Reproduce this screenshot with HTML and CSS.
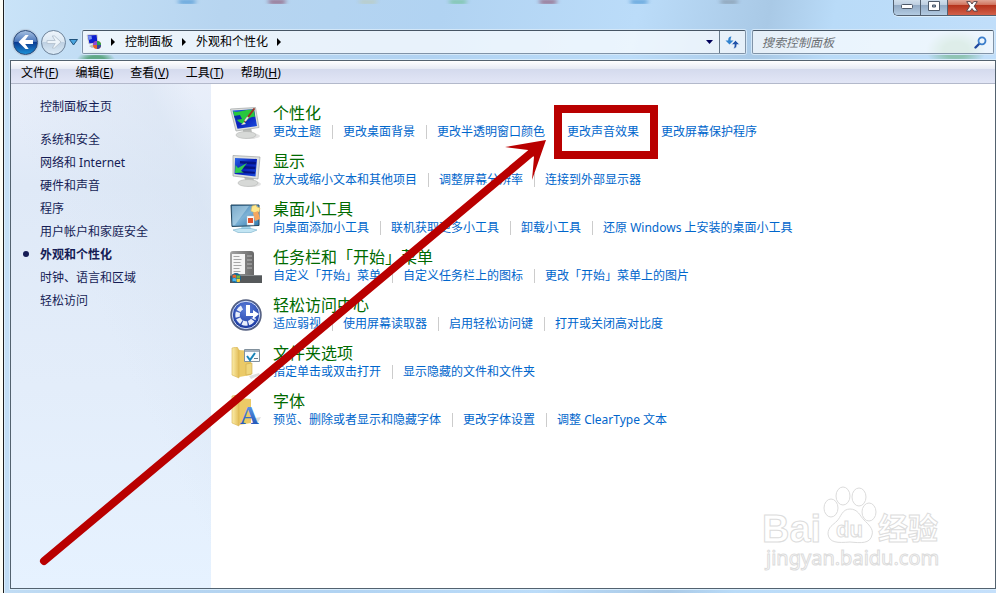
FILE: index.html
```html
<!DOCTYPE html>
<html lang="zh-CN">
<head>
    <meta charset="UTF-8">
    <meta name="viewport" content="width=device-width, initial-scale=1.0">
    <title>外观和个性化</title>
    <link rel="stylesheet" href="styles.css">
</head>
<body>

    <div class="window">
        <div class="caption">
            <div class="taskbar-blur">
                <i class="spot blue"></i>
                <i class="spot red"></i>
                <i class="spot yellow"></i>
                <i class="spot green"></i>
                <i class="spot red"></i>
                <i class="spot blue"></i>
                <i class="spot gray"></i>
            </div>
            <div class="caption-buttons">
                <button class="caption-button" aria-label="最小化">
                    <svg width="14" height="8" viewBox="0 0 14 8"><rect x="1.5" y="2.5" width="11" height="4" rx="1" fill="#fff" stroke="#4d5969"/></svg>
                </button>
                <button class="caption-button" aria-label="最大化">
                    <svg width="12" height="11" viewBox="0 0 12 11"><path d="M.5.5h11v9H.5zM4.500 4h3v2h-3z" fill="#fff" fill-rule="evenodd" stroke="#4d5969"/></svg>
                </button>
                <button class="caption-button close" aria-label="关闭">
                    <svg width="12" height="11" viewBox="0 0 12 11"><path d="M.7.600h3.600L6 3 7.700.600h3.600L8.200 5.200l3.300 4.900H7.800L6 7.500l-1.800 2.600H.5l3.300-4.900z" fill="#fff" stroke="#59484d"/></svg>
                </button>
            </div>
        </div>

        <div class="nav-bar">
            <div class="history">
                <button class="round back" aria-label="后退">
                    <svg width="16" height="14" viewBox="0 0 16 14"><path d="M7.500 0 .5 7l7 7h3.200L7.200 9H15V5H7.200l3.500-5z" fill="#fff"/></svg>
                </button>
                <button class="round forward" aria-label="前进">
                    <svg width="16" height="14" viewBox="0 0 16 14"><path d="m8.500 1 6.500 6-6.500 6H6.200l3-4.500H1v-3h8.200L6.200 1z" fill="#edf4fa" stroke="#b9c6d3"/></svg>
                </button>
                <button class="recent" aria-label="最近浏览的页面">
                    <svg width="9" height="7" viewBox="0 0 9 7"><path d="M.5.5h8L4.500 6z" fill="#4aa5e0" stroke="#1f527d"/></svg>
                </button>
            </div>
            <div class="address">
                <svg width="16" height="16" viewBox="0 0 16 16">
                    <path d="m1 1 10-.5 1 8.500-9 1z" fill="#0d1ed0" stroke="#d9d9d4"/>
                    <path d="m2 2 3.500 0 .5 3-3.500 1z" fill="#7892f2"/>
                    <path d="m3 12 5-2 3 2-5 2z" fill="#bbbdb9"/>
                    <circle cx="11" cy="11" r="4" fill="#e3632b"/>
                    <path d="M11 11V7a4 4 0 0 1 4 4z" fill="#26a64b"/>
                    <path d="M11 11H7a4 4 0 0 1 4-4z" fill="#8d4ad5"/>
                    <path d="M11 11h4a4 4 0 0 1-4 4z" fill="#37469f"/>
                </svg>
                <nav class="crumbs">
                    <i class="arrow"></i><a href="#">控制面板</a>
                    <i class="arrow"></i><a href="#">外观和个性化</a>
                    <i class="arrow"></i>
                </nav>
                <button class="drop" aria-label="以前的位置"><svg width="7" height="4" viewBox="0 0 7 4"><path d="M0 0h7L3.500 4z" fill="#00005a"/></svg></button>
                <button class="refresh" aria-label="刷新">
                    <svg width="15" height="13" viewBox="0 0 15 13">
                        <path d="M6.500.500C4 .5 3.200 2 3.200 4.500H.5l4 4 4-4H5.600c0-1.700.2-2.600.900-4z" fill="#3183cf"/>
                        <path d="M8.500 12.500c2.500 0 3.300-1.500 3.300-4h2.700l-4-4-4 4h2.900c0 1.700-.2 2.600-.9 4z" fill="#2253a9" stroke="#eaf3fc" stroke-width=".5"/>
                    </svg>
                </button>
            </div>
            <div class="search">
                <input type="text" class="search-box" aria-label="搜索控制面板" placeholder="搜索控制面板">
                <svg width="13" height="13" viewBox="0 0 13 13" fill="none" stroke-linecap="round">
                    <path d="M1.500 11.500 5 8" stroke="#20489e" stroke-width="2.400"/>
                    <circle cx="8" cy="4.800" r="3.500" stroke="#3b7ecb" stroke-width="1.800"/>
                </svg>
            </div>
        </div>

        <div class="frame">
            <div class="menu-bar">
                <button>文件(<u>F</u>)</button>
                <button>编辑(<u>E</u>)</button>
                <button>查看(<u>V</u>)</button>
                <button>工具(<u>T</u>)</button>
                <button>帮助(<u>H</u>)</button>
            </div>
            <div class="main">
                <aside class="sidebar">
                    <a class="home" href="#">控制面板主页</a>
                    <ul>
                        <li><a href="#">系统和安全</a></li>
                        <li><a href="#">网络和 Internet</a></li>
                        <li><a href="#">硬件和声音</a></li>
                        <li><a href="#">程序</a></li>
                        <li><a href="#">用户帐户和家庭安全</a></li>
                        <li class="current"><a href="#">外观和个性化</a></li>
                        <li><a href="#">时钟、语言和区域</a></li>
                        <li><a href="#">轻松访问</a></li>
                    </ul>
                </aside>

                <div class="content">
                    <svg width="0" height="0" class="defs">
                        <defs>
                            <linearGradient id="folder" x1="0" x2="1"><stop offset="0" stop-color="#fbedaa"/><stop offset="1" stop-color="#e3bd57"/></linearGradient>
                            <linearGradient id="screen" x1="0" y1="0" x2="1" y2="1"><stop offset="0" stop-color="#2a66e8"/><stop offset=".5" stop-color="#0a21b8"/><stop offset="1" stop-color="#1c4fe0"/></linearGradient>
                            <linearGradient id="glass" x1="0" y1="0" x2="1" y2="1"><stop offset="0" stop-color="#2d6d9e"/><stop offset=".5" stop-color="#7db2d6"/><stop offset="1" stop-color="#2c78ad"/></linearGradient>
                            <linearGradient id="panel" x1="0" x2="1"><stop offset="0" stop-color="#a5a5a5"/><stop offset="1" stop-color="#686868"/></linearGradient>
                            <radialGradient id="ease" cx=".5" cy=".3" r=".7"><stop offset="0" stop-color="#5c7fda"/><stop offset="1" stop-color="#15339c"/></radialGradient>
                            <linearGradient id="letter" x1="0" y1="0" x2="0" y2="1"><stop offset="0" stop-color="#6ca7ee"/><stop offset="1" stop-color="#1245ad"/></linearGradient>
                        </defs>
                    </svg>

                    <div class="category">
                        <svg width="32" height="32" viewBox="0 0 32 32">
                            <ellipse cx="20" cy="29" rx="10" ry="3" fill="#e3e3e3"/>
                            <path d="m12 21 9-1 1 6-8 1z" fill="#b8bab8"/>
                            <ellipse cx="16" cy="28" rx="10" ry="3.500" fill="#d7d9d7" stroke="#b3b5b3" stroke-width=".6"/>
                            <path d="m.5 2 25-1.500 3.500 20-23 3.500z" fill="#dfe1df" stroke="#9fa3a3" stroke-width=".7"/>
                            <path d="m2.500 3.500 21.500-1.200 3 16.700-19.500 2.800z" fill="url(#screen)"/>
                            <path d="M3 4c5 3 10-2 21-1l1 7c-5-1-8 4-12 7L9 15l-4-4z" fill="#28c83e"/>
                            <path d="m4 9 6-1 2 4-6 1z" fill="#0b27ae"/>
                            <path d="m14 15-3 3 5-1z" fill="#efe9ce"/>
                            <path d="m15 14 9-12" stroke="#9a3324" stroke-width="2" stroke-linecap="round"/>
                            <path d="m15 14 3-4" stroke="#d9dee8" stroke-width="2"/>
                        </svg>
                        <div>
                            <h2><a href="#">个性化</a></h2>
                            <ul class="tasks">
                                <li><a href="#">更改主题</a></li>
                                <li><a href="#">更改桌面背景</a></li>
                                <li><a href="#">更改半透明窗口颜色</a></li>
                                <li><a href="#">更改声音效果</a></li>
                                <li><a href="#">更改屏幕保护程序</a></li>
                            </ul>
                        </div>
                    </div>

                    <div class="category">
                        <svg width="32" height="32" viewBox="0 0 32 32">
                            <ellipse cx="22" cy="29" rx="9" ry="3" fill="#e3e3e3"/>
                            <path d="m14 22 9-1 1 5-8 1z" fill="#b8bab8"/>
                            <ellipse cx="18" cy="28" rx="10" ry="3.500" fill="#d7d9d7" stroke="#b3b5b3" stroke-width=".6"/>
                            <path d="m3 .5 27 1.500-2 22-25-3z" fill="#dfe1df" stroke="#9fa3a3" stroke-width=".7"/>
                            <path d="m5 3 22 1-1.500 17.500L4.500 19z" fill="url(#screen)"/>
                            <path d="m10 6 16 1-.3 2.500L10 8.500zM13 11l12.500.7-.3 2.500-12.500-.7zM12 16l13 .7-.2 2-13-.7z" fill="#061482"/>
                            <path d="m5 18 .5-8 2.500 3 9-5-6 8 3 1.500z" fill="#31cc50"/>
                        </svg>
                        <div>
                            <h2><a href="#">显示</a></h2>
                            <ul class="tasks">
                                <li><a href="#">放大或缩小文本和其他项目</a></li>
                                <li><a href="#">调整屏幕分辨率</a></li>
                                <li><a href="#">连接到外部显示器</a></li>
                            </ul>
                        </div>
                    </div>

                    <div class="category">
                        <svg width="32" height="32" viewBox="0 0 32 32">
                            <path d="M12 22h8l1 4H11z" fill="#9fd3ea"/>
                            <path d="m3 27 7-1.500h11l6 1.500-6 2.500H8z" fill="#c2e5f3" stroke="#77afca" stroke-width=".6"/>
                            <path d="M1 2h28v20.500L2 23.500z" fill="url(#glass)" stroke="#25475e"/>
                            <path d="M2 3h17L5 22H2.500z" fill="#bcdbeb" opacity=".55"/>
                            <path d="m22 3 4-1 1 2 3 1-1 4-4 1-4-2z" fill="#ffe78b" stroke="#dcb44c" stroke-width=".5"/>
                            <path d="m23 10 5-2 2 8-5 2z" fill="#f5a65e"/>
                            <path d="M17 13h7v9h-7z" fill="#fff" stroke="#b8c0c5" stroke-width=".5"/>
                            <path d="M18 15h5v5h-5z" fill="#e2542e"/>
                        </svg>
                        <div>
                            <h2><a href="#">桌面小工具</a></h2>
                            <ul class="tasks">
                                <li><a href="#">向桌面添加小工具</a></li>
                                <li><a href="#">联机获取更多小工具</a></li>
                                <li><a href="#">卸载小工具</a></li>
                                <li><a href="#">还原 Windows 上安装的桌面小工具</a></li>
                            </ul>
                        </div>
                    </div>

                    <div class="category">
                        <svg width="32" height="32" viewBox="0 0 32 32">
                            <path d="M3 0h18q3 0 3 3v22H0V3q0-3 3-3z" fill="url(#panel)"/>
                            <path d="M2 3h13v20H2z" fill="#f5f5f5"/>
                            <path d="M3.500 5.500h6m-6 3h8m-8 3h7m-7 3h8m-8 3h6m-6 3h7" stroke="#a6a6a6"/>
                            <path d="M17 5h5m-5 4h5m-5 4h5m-5 4h5" stroke="#b5b5b5"/>
                            <path d="M0 24h32v8H0z" fill="#56595b"/>
                            <path d="M0 24.500h32" stroke="#85898b"/>
                            <circle cx="6" cy="27" r="5" fill="#176796"/>
                            <path d="M2.500 24q2-1 3.500 0v3q-2-1-3.500 0z" fill="#e9672d"/>
                            <path d="M6.500 24q2 1 3.500 0v3q-2 1-3.500 0z" fill="#75b73b"/>
                            <path d="M2.500 27.500q2-1 3.500 0v3q-2-1-3.500 0z" fill="#4bb7f2"/>
                            <path d="M6.500 27.500q2 1 3.500 0v3q-2 1-3.500 0z" fill="#f6cf3e"/>
                        </svg>
                        <div>
                            <h2><a href="#">任务栏和「开始」菜单</a></h2>
                            <ul class="tasks">
                                <li><a href="#">自定义「开始」菜单</a></li>
                                <li><a href="#">自定义任务栏上的图标</a></li>
                                <li><a href="#">更改「开始」菜单上的图片</a></li>
                            </ul>
                        </div>
                    </div>

                    <div class="category">
                        <svg width="32" height="32" viewBox="0 0 32 32">
                            <circle cx="16" cy="16" r="15" fill="url(#ease)" stroke="#566180" stroke-width="1.500"/>
                            <circle cx="16" cy="16" r="13.700" fill="none" stroke="#d9e2f3" stroke-width="1"/>
                            <path d="M12 8.500A8.500 8.500 0 1 0 24 19" fill="none" stroke="#e8eefa" stroke-width="4.500" stroke-dasharray="5 1.200"/>
                            <path d="M16 6h4v8h3v-3l6 4-6 5v-3h-7z" fill="#fff"/>
                        </svg>
                        <div>
                            <h2><a href="#">轻松访问中心</a></h2>
                            <ul class="tasks">
                                <li><a href="#">适应弱视</a></li>
                                <li><a href="#">使用屏幕读取器</a></li>
                                <li><a href="#">启用轻松访问键</a></li>
                                <li><a href="#">打开或关闭高对比度</a></li>
                            </ul>
                        </div>
                    </div>

                    <div class="category">
                        <svg width="32" height="32" viewBox="0 0 32 32">
                            <path d="m19 29 10-3 1 2-9 4z" fill="#dedede"/>
                            <path d="m9 3 12 1v24l-12 2z" fill="#ebca67"/>
                            <path d="m16 17 6-1v11l-6 1z" fill="#f0d67c" stroke="#cda94c" stroke-width=".6"/>
                            <path d="m2 1 5-1 2 3v28l-7-3z" fill="url(#folder)" stroke="#d7b353" stroke-width=".6"/>
                            <path d="M14.500 2.500h15v12h-15z" fill="#f8fbfd" stroke="#81909c"/>
                            <path d="M15 4h14" stroke="#a4b2bf" stroke-width="2"/>
                            <path d="m17 9 3 4 5-7" fill="none" stroke="#1683b8" stroke-width="2"/>
                            <path d="M24 11.500h4" stroke="#657a89"/>
                        </svg>
                        <div>
                            <h2><a href="#">文件夹选项</a></h2>
                            <ul class="tasks">
                                <li><a href="#">指定单击或双击打开</a></li>
                                <li><a href="#">显示隐藏的文件和文件夹</a></li>
                            </ul>
                        </div>
                    </div>

                    <div class="category">
                        <svg width="32" height="32" viewBox="0 0 32 32">
                            <path d="m25 23 6-1-4 7z" fill="#dedede"/>
                            <path d="m9 3 12 1v24l-12 2z" fill="#ebca67"/>
                            <path d="m2 1 5-1 2 3v28l-7-3z" fill="url(#folder)" stroke="#d7b353" stroke-width=".6"/>
                            <text class="font-letter" x="10" y="29" fill="url(#letter)">A</text>
                        </svg>
                        <div>
                            <h2><a href="#">字体</a></h2>
                            <ul class="tasks">
                                <li><a href="#">预览、删除或者显示和隐藏字体</a></li>
                                <li><a href="#">更改字体设置</a></li>
                                <li><a href="#">调整 ClearType 文本</a></li>
                            </ul>
                        </div>
                    </div>

                    <!-- watermark in the lower right corner -->
                    <svg class="watermark" width="184" height="92" viewBox="0 0 184 92">
                        <g class="outline">
                            <text class="brand" x="2" y="58">Bai</text>
                            <ellipse cx="71" cy="24" rx="7" ry="9"/>
                            <ellipse cx="83" cy="12" rx="7" ry="9"/>
                            <ellipse cx="99" cy="13" rx="7" ry="9"/>
                            <ellipse cx="109" cy="28" rx="7" ry="9"/>
                            <path d="M90 25c8 0 10 7 14 11s10 9 8 15c-2 9-11 8-22 7-12 1-21 1-22-8 0-7 5-9 9-13s5-12 13-12z"/>
                            <text class="du" x="76" y="53">du</text>
                            <text class="brand-cn" x="118" y="55">经验</text>
                            <text class="site" x="6" y="81">jingyan.baidu.com</text>
                        </g>
                    </svg>
                </div>
            </div>
        </div>
    </div>

    <!-- red marks drawn over the window -->
    <svg class="marks" width="700" height="590" viewBox="0 0 700 590">
        <rect x="558" y="109" width="96" height="46" fill="none" stroke="#b90000" stroke-width="8"/>
        <path d="M44 561 531 153" stroke="#b90000" stroke-width="8" stroke-linecap="round"/>
        <path d="m546 140-41 7 23 3 6 7-2 23z" fill="#b90000"/>
    </svg>

</body>
</html>
```
FILE: styles.css
```css
* {
    box-sizing: border-box;
}
body {
    margin: 0;
    padding-left: 3px;
    position: relative;
    background-color: #fdfdf6;
    font-family: "Noto Sans", "Noto Sans CJK SC", sans-serif;
    font-size: 12px;
    color: #000;
}
a {
    color: inherit;
    text-decoration: none;
}
ul {
    margin: 0;
    padding: 0;
    list-style: none;
}
button {
    padding: 0;
    border: none;
    background: none;
    font: inherit;
    color: inherit;
}
svg {
    display: block;
    flex: none;
}

/* window glass */
.window {
    display: flex;
    flex-direction: column;
    min-height: 100vh;
    padding: 0 0 4px 6px;
    border-left: 1px solid #1c1e20;
    background:
        radial-gradient(ellipse 20px 12px at 92px 62px, #5fa886 50%, transparent 100%),
        radial-gradient(ellipse 30px 20px at calc(100% - 40px) 50px, #8fc4b4 40%, transparent 100%),
        linear-gradient(100deg, #c9e3f8 0, #b7d5f0 20%, #b1d3f2 40%, #bbdcf9 58%, #a9c9e6 70%, #b9dbf8 76%, #c5e0fb 100%);
    box-shadow: inset 1px 0 #dceefb;
}
.caption {
    display: flex;
    justify-content: space-between;
    height: 29px;
}
.taskbar-blur {
    display: flex;
    flex: 1;
    justify-content: space-between;
    height: 4px;
    padding: 0 155px 0 168px;
    overflow: hidden;
}
.spot {
    width: 18px;
    height: 4px;
    border-radius: 0 0 9px 9px;
    filter: blur(2px);
}
.spot.blue { background-color: #4d97d5; }
.spot.red { background-color: #8f5a78; }
.spot.yellow { background-color: #bccbbd; }
.spot.green { background-color: #70c29b; }
.spot.gray { background-color: #8699ab; }
.caption-buttons {
    display: flex;
    height: 16px;
    border: 1px solid #536171;
    border-top: none;
    border-right: none;
    border-radius: 0 0 0 5px;
    overflow: hidden;
    box-shadow: 0 1px #dceefb;
}
.caption-button {
    display: flex;
    align-items: center;
    justify-content: center;
    width: 27px;
    padding-bottom: 3px;
    border-right: 1px solid #536171;
    background: linear-gradient(#d0dfed 0, #bccddf 35%, #93abc5 36%, #b3cbe2 100%);
}
.caption-button.close {
    width: 48px;
    border-right: none;
    background: linear-gradient(#e0a595 0, #cf6f59 35%, #b5331c 36%, #d2604a 100%);
}

/* navigation row */
.nav-bar {
    display: flex;
    align-items: center;
    height: 26px;
    margin-bottom: 5px;
    padding: 0 2px 0 3px;
}
.history {
    display: flex;
    align-items: center;
    gap: 3px;
    width: 69px;
}
.round {
    display: flex;
    align-items: center;
    justify-content: center;
    width: 25px;
    height: 25px;
    border: 1px solid #6d8299;
    border-radius: 50%;
}
.back {
    border-color: #2b4876;
    background: linear-gradient(#a5bfe0 0, #4c78bd 45%, #0b3c93 50%, #1c8fd5 100%);
    box-shadow: 0 0 1px 1px #b8cadd;
}
.forward {
    background: linear-gradient(#edf4fb 0, #dbe7f2 48%, #bed0e2 50%, #dcebf7 100%);
}
.address {
    display: flex;
    flex: 1;
    align-items: center;
    height: 24px;
    padding-left: 3px;
    border: 1px solid #8093a7;
    border-top-color: #465564;
    border-radius: 2px;
    background-color: rgba(255, 255, 255, 0.7);
    box-shadow: 0 0 0 1px #d3e7f8;
}
.crumbs {
    display: flex;
    flex: 1;
    align-items: center;
    line-height: 22px;
}
.arrow {
    border: 4px solid transparent;
    border-left-color: #000;
    border-right: none;
    margin: 0 10px 0 9px;
}
.drop {
    padding: 0 6px;
}
.refresh {
    display: flex;
    align-items: center;
    justify-content: center;
    width: 26px;
    height: 22px;
    border-left: 1px solid #66788a;
}
.search {
    display: flex;
    align-items: center;
    width: 242px;
    height: 24px;
    margin-left: 6px;
    padding: 0 6px 0 9px;
    border: 1px solid #8093a7;
    border-top-color: #465564;
    border-radius: 2px;
    background-color: rgba(255, 255, 255, 0.7);
    box-shadow: 0 0 0 1px #d3e7f8;
}
.search-box {
    flex: 1;
    min-width: 0;
    padding: 0;
    border: none;
    outline: none;
    background: none;
    font: inherit;
    font-style: italic;
}
.search-box::placeholder {
    color: #6b6f73;
}

/* client area */
.frame {
    display: flex;
    flex: 1;
    flex-direction: column;
    border: 1px solid #53626f;
    box-shadow: 0 0 0 1px #d9edfc;
}
.menu-bar {
    display: flex;
    gap: 1px;
    height: 23px;
    padding-left: 2px;
    border-bottom: 1px solid #b3b9cb;
    background: linear-gradient(#fff 0, #e6eaf4 8px, #d4daed 8px, #e2e6f6 100%);
}
.menu-bar button {
    padding: 0 8px;
}
.main {
    display: flex;
    flex: 1;
}
.sidebar {
    width: 200px;
    padding: 11px 0 0 29px;
    background: linear-gradient(65deg, transparent 50%, rgba(214, 226, 241, 0.5) 85%, transparent 95%), linear-gradient(#e9effa 0, #dfe9f7 20%, #e3edfa 60%, #e6f2ff 100%);
    color: #151c55;
    line-height: 23px;
}
.home {
    display: block;
    margin-bottom: 10px;
}
.current {
    position: relative;
    font-weight: bold;
}
.current::before {
    content: "";
    position: absolute;
    left: -17px;
    top: 8px;
    width: 6px;
    height: 6px;
    border-radius: 50%;
    background-color: #151c55;
}
.content {
    flex: 1;
    position: relative;
    padding: 20px 0 0 19px;
    background-color: #fff;
}
.defs {
    position: absolute;
}
.category {
    display: flex;
    align-items: center;
    gap: 11px;
    margin-bottom: 10px;
}
.category h2 {
    margin: 0;
    font-size: 16px;
    font-weight: normal;
    line-height: 18px;
    color: #006a00;
}
.tasks {
    display: flex;
    line-height: 20px;
    color: #0066cc;
}
.tasks li {
    display: flex;
    align-items: center;
    white-space: nowrap;
}
.tasks li + li::before {
    content: "";
    width: 1px;
    height: 14px;
    margin: 0 10px 0 11px;
    background-color: #ccc;
}
.font-letter {
    font-family: "Liberation Serif", serif;
    font-size: 26px;
    font-weight: bold;
}

.watermark {
    position: absolute;
    right: 51px;
    bottom: 12px;
}
.outline {
    fill: #fff;
    stroke: #dcdcdc;
    stroke-width: 1px;
}
.brand {
    font: bold 38px "Liberation Sans", sans-serif;
}
.du {
    font: bold 22px "Liberation Sans", sans-serif;
}
.brand-cn {
    font: bold 30px "Noto Sans CJK SC", sans-serif;
}
.site {
    font: 20px "Noto Sans", sans-serif;
}

.marks {
    position: absolute;
    left: 0;
    top: 0;
    pointer-events: none;
}
```
